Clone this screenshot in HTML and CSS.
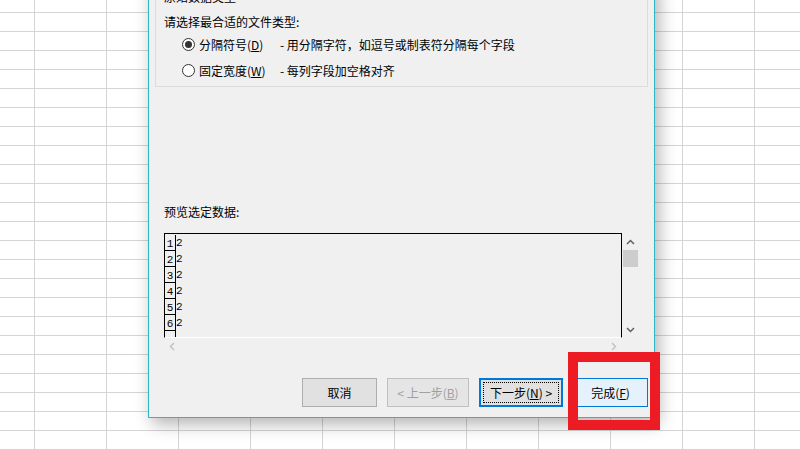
FILE: index.html
```html
<!DOCTYPE html>
<html lang="zh-CN">
<head>
  <meta charset="UTF-8">
  <title>文本导入向导</title>
  <link rel="stylesheet" href="styles.css">
</head>
<body>
  <div class="dialog">
    <div class="group">
      <div class="group-title">原始数据类型</div>
      <div class="prompt">请选择最合适的文件类型:</div>
      <div class="radio-row">
        <span class="radio checked"></span>
        <span class="radio-label">分隔符号(<u>D</u>)</span>
        <span class="radio-desc">- 用分隔字符，如逗号或制表符分隔每个字段</span>
      </div>
      <div class="radio-row second">
        <span class="radio"></span>
        <span class="radio-label">固定宽度(<u>W</u>)</span>
        <span class="radio-desc">- 每列字段加空格对齐</span>
      </div>
    </div>

    <div class="preview-label">预览选定数据:</div>
    <div class="preview">
      <div class="preview-body">
        <div class="prow"><span class="num">1</span><span class="val">2</span></div>
        <div class="prow"><span class="num">2</span><span class="val">2</span></div>
        <div class="prow"><span class="num">3</span><span class="val">2</span></div>
        <div class="prow"><span class="num">4</span><span class="val">2</span></div>
        <div class="prow"><span class="num">5</span><span class="val">2</span></div>
        <div class="prow"><span class="num">6</span><span class="val">2</span></div>
        <div class="prow"><span class="num"></span></div>
      </div>
      <div class="vscroll">
        <span class="arrow"><svg width="9" height="6" viewBox="0 0 9 6"><polyline points="1,5 4.5,1.5 8,5" fill="none" stroke="#606060" stroke-width="1.5"/></svg></span>
        <span class="thumb"></span>
        <span class="spacer"></span>
        <span class="arrow"><svg width="9" height="6" viewBox="0 0 9 6"><polyline points="1,1 4.5,4.5 8,1" fill="none" stroke="#606060" stroke-width="1.5"/></svg></span>
      </div>
      <div class="hscroll">
        <svg width="6" height="9" viewBox="0 0 6 9"><polyline points="5,1 1.5,4.5 5,8" fill="none" stroke="#c2c2c2" stroke-width="1.5"/></svg>
        <svg width="6" height="9" viewBox="0 0 6 9"><polyline points="1,1 4.5,4.5 1,8" fill="none" stroke="#c2c2c2" stroke-width="1.5"/></svg>
      </div>
      <div class="corner"></div>
    </div>

    <div class="buttons">
      <button class="btn cancel">取消</button>
      <button class="btn back" disabled>&lt; 上一步(<u>B</u>)</button>
      <button class="btn next"><span class="focus">下一步(<u>N</u>) &gt;</span></button>
      <button class="btn finish">完成(<u>F</u>)</button>
    </div>
  </div>

  <!-- red marker round the finish button -->
  <div class="highlight"></div>
</body>
</html>
```

FILE: styles.css
```css
/* ---- spreadsheet grid behind the dialog ---- */
body {
  margin: 0; width: 800px; height: 450px; overflow: hidden;
  position: relative;
  background-color: #fff;
  background-image:
    linear-gradient(to right, #d4d4d4 1px, transparent 1px),
    linear-gradient(to bottom, #d4d4d4 1px, transparent 1px);
  background-size: 72px 100%, 100% 19px;
  background-position: 34px 0, 0 12px;
  font-family: "Noto Sans CJK SC", sans-serif;
  font-size: 12px; color: #000;
}

/* ---- dialog window ---- */
.dialog {
  position: absolute; left: 148px; top: -20px;
  width: 507px; height: 438px; box-sizing: border-box;
  border: 1px solid #2ab7c6; background: #f0f0f0;
  box-shadow: 4px 6px 16px rgba(0,0,0,0.3);
  padding: 7px 6px 0;
  display: flex; flex-direction: column;
}

/* file type group */
.group { border: 1px solid #dcdcdc; padding: 0 8px 6px; }
.group-title { line-height: 16px; }
.prompt { line-height: 16px; margin-top: 9px; }
.radio-row { display: flex; align-items: center; height: 20px; margin-top: 4px; padding-left: 18px; }
.radio-row.second { margin-top: 6px; }
.radio {
  width: 13px; height: 13px; box-sizing: border-box;
  border: 1px solid #333; border-radius: 50%; background: #fff;
  display: flex; align-items: center; justify-content: center;
}
.radio.checked::after { content: ''; width: 7px; height: 7px; border-radius: 50%; background: #333; }
.radio-label { margin-left: 4px; width: 81px; }

/* preview */
.preview-label { line-height: 16px; margin: 117px 0 0 9px; }
.preview {
  margin: 13px 0 0 9px; width: max-content;
  display: grid; grid-template-columns: 458px 17px; grid-template-rows: 105px 16px;
}
.preview-body {
  box-sizing: border-box; overflow: hidden;
  border: 1px solid #000; border-bottom-color: #fff;
  font-family: "Liberation Mono", monospace; font-size: 11px;
}
.prow { display: flex; height: 16px; }
.prow:first-child { margin-top: 1px; }
.num {
  width: 11px; height: 16px; box-sizing: border-box;
  border-right: 1px solid #000; border-bottom: 1px solid #000;
  display: flex; align-items: flex-end; justify-content: center; line-height: 11px;
}
.val { line-height: 12px; margin-top: 2px; }

.vscroll { display: flex; flex-direction: column; align-items: center; }
.vscroll .arrow { height: 17px; display: flex; align-items: center; justify-content: center; }
.vscroll .thumb { width: 15px; height: 17px; background: #cdcdcd; }
.vscroll .spacer { flex: 1; }
.hscroll { display: flex; align-items: center; justify-content: space-between; padding: 0 5px; }

/* buttons */
.buttons { display: flex; justify-content: flex-end; gap: 10px; margin-top: 24px; }
.btn {
  height: 29px; box-sizing: border-box; padding: 0;
  border: 1px solid #adadad; background: #e1e1e1;
  font: inherit; color: #000;
  display: flex; align-items: center; justify-content: center;
}
.btn.cancel { width: 75px; }
.btn.back { width: 82px; color: #a0a0a0; border-color: #bfbfbf; background: #e5e5e5; }
.btn.next { width: 84px; border: 2px solid #0078d7; padding: 2px; }
.btn.next .focus {
  flex: 1; align-self: stretch; border: 1px dotted #000;
  display: flex; align-items: center; justify-content: center;
}
.btn.finish { width: 75px; background: #e5f1fb; border-color: #0078d7; }

/* annotation frame */
.highlight {
  position: absolute; left: 568px; top: 352px;
  width: 92px; height: 78px; box-sizing: border-box;
  border: 10px solid #ed1c24;
}
```
